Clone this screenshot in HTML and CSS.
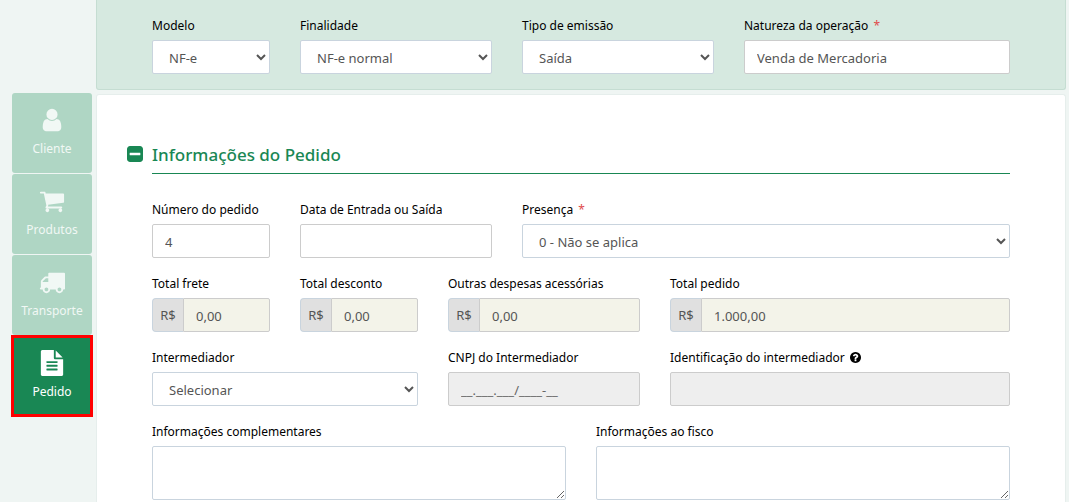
FILE: index.html
```
<!DOCTYPE html>
<html lang="pt-br">
<head>
    <meta charset="utf-8">
    <title>Informações do Pedido</title>
    <link rel="stylesheet" href="styles.css">
</head>
<body>
    <nav class="abas">
        <a class="aba" href="#cliente">
            <svg class="icone" viewBox="0 0 1792 1792"><path d="M1536 1399q0 109-62.500 187t-150.500 78h-854q-88 0-150.500-78t-62.500-187q0-85 8.500-160.500t31.500-152 58.500-131 94-89 134.500-34.500q131 128 313 128t313-128q76 0 134.500 34.500t94 89 58.500 131 31.500 152 8.500 160.500zm-256-887q0 159-112.500 271.500t-271.500 112.500-271.500-112.500-112.500-271.500 112.500-271.500 271.500-112.500 271.500 112.500 112.500 271.500z"/></svg>
            <span>Cliente</span>
        </a>
        <a class="aba" href="#produtos">
            <svg class="icone" viewBox="0 0 1792 1792"><path d="M704 1536q0 52-38 90t-90 38-90-38-38-90 38-90 90-38 90 38 38 90zm896 0q0 52-38 90t-90 38-90-38-38-90 38-90 90-38 90 38 38 90zm128-1088v512q0 24-16.500 42.500t-40.500 21.500l-1044 122q13 60 13 70 0 16-24 64h920q26 0 45 19t19 45-19 45-45 19h-1024q-26 0-45-19t-19-45q0-11 8-31.500t16-36 21.500-40 15.500-29.500l-177-823h-204q-26 0-45-19t-19-45 19-45 45-19h256q16 0 28.500 6.500t19.500 15.500 13 24.500 8 26 5.500 29.500 4.500 26h1201q26 0 45 19t19 45z"/></svg>
            <span>Produtos</span>
        </a>
        <a class="aba" href="#transporte">
            <svg class="icone" viewBox="0 0 1792 1792"><path d="M640 1408q0-52-38-90t-90-38-90 38-38 90 38 90 90 38 90-38 38-90zm-384-512h384v-256h-158q-13 0-22 9l-195 195q-9 9-9 22v30zm1280 512q0-52-38-90t-90-38-90 38-38 90 38 90 90 38 90-38 38-90zm256-1088v1024q0 15-4 26.500t-13.500 18.500-16.500 11.500-23.500 6-22.500 2-25.500 0-22.500-.5q0 106-75 181t-181 75-181-75-75-181h-384q0 106-75 181t-181 75-181-75-75-181h-64q-3 0-22.500.5t-25.500 0-22.500-2-23.500-6-16.500-11.500-13.500-18.500-4-26.500q0-26 19-45t45-19v-320q0-8-.5-35t0-38 2.500-34.500 6.500-37 14-30.500 22.500-30l198-198q19-19 50.500-32t58.500-13h160v-192q0-26 19-45t45-19h1024q26 0 45 19t19 45z"/></svg>
            <span>Transporte</span>
        </a>
        <a class="aba ativa" href="#pedido">
            <svg class="icone" viewBox="0 0 1792 1792"><path d="M1596 476q14 14 28 36h-472v-472q22 14 36 28zm-476 164h544v1056q0 40-28 68t-68 28h-1344q-40 0-68-28t-28-68v-1600q0-40 28-68t68-28h800v544q0 40 28 68t68 28zm160 736v-64q0-14-9-23t-23-9h-704q-14 0-23 9t-9 23v64q0 14 9 23t23 9h704q14 0 23-9t9-23zm0-256v-64q0-14-9-23t-23-9h-704q-14 0-23 9t-9 23v64q0 14 9 23t23 9h704q14 0 23-9t9-23zm0-256v-64q0-14-9-23t-23-9h-704q-14 0-23 9t-9 23v64q0 14 9 23t23 9h704q14 0 23-9t9-23z"/></svg>
            <span>Pedido</span>
        </a>
    </nav>

    <form class="conteudo">
        <section class="painel painel-topo">
            <div class="linha">
                <div class="campo col-2">
                    <label for="modelo">Modelo</label>
                    <select id="modelo"><option>NF-e</option></select>
                </div>
                <div class="campo col-3">
                    <label for="finalidade">Finalidade</label>
                    <select id="finalidade"><option>NF-e normal</option></select>
                </div>
                <div class="campo col-3">
                    <label for="tipo">Tipo de emissão</label>
                    <select id="tipo"><option>Saída</option></select>
                </div>
                <div class="campo col-4">
                    <label for="natureza">Natureza da operação <span class="obrigatorio">*</span></label>
                    <input type="text" id="natureza" value="Venda de Mercadoria">
                </div>
            </div>
        </section>

        <section class="painel painel-pedido" id="pedido">
            <div class="titulo">
                <button type="button" class="recolher" aria-label="Recolher">
                    <svg viewBox="128 128 1536 1536"><path d="M1408 960v-128q0-26-19-45t-45-19h-896q-26 0-45 19t-19 45v128q0 26 19 45t45 19h896q26 0 45-19t19-45zm256-544v960q0 119-84.500 203.500t-203.500 84.500h-960q-119 0-203.500-84.500t-84.500-203.500v-960q0-119 84.500-203.500t203.500-84.500h960q119 0 203.500 84.500t84.500 203.500z"/></svg>
                </button>
                <h2>Informações do Pedido</h2>
            </div>
            <div class="linha">
                <div class="campo col-2">
                    <label for="numero">Número do pedido</label>
                    <input type="text" id="numero" value="4">
                </div>
                <div class="campo col-3">
                    <label for="data">Data de Entrada ou Saída</label>
                    <input type="text" id="data">
                </div>
                <div class="campo col-7">
                    <label for="presenca">Presença <span class="obrigatorio">*</span></label>
                    <select id="presenca"><option>0 - Não se aplica</option></select>
                </div>

                <div class="campo col-2">
                    <label for="frete">Total frete</label>
                    <div class="grupo"><span class="moeda">R$</span><input type="text" id="frete" value="0,00" readonly></div>
                </div>
                <div class="campo col-2">
                    <label for="desconto">Total desconto</label>
                    <div class="grupo"><span class="moeda">R$</span><input type="text" id="desconto" value="0,00" readonly></div>
                </div>
                <div class="campo col-3">
                    <label for="despesas">Outras despesas acessórias</label>
                    <div class="grupo"><span class="moeda">R$</span><input type="text" id="despesas" value="0,00" readonly></div>
                </div>
                <div class="campo col-5">
                    <label for="total">Total pedido</label>
                    <div class="grupo"><span class="moeda">R$</span><input type="text" id="total" value="1.000,00" readonly></div>
                </div>

                <div class="campo col-4">
                    <label for="intermediador">Intermediador</label>
                    <select id="intermediador"><option>Selecionar</option></select>
                </div>
                <div class="campo col-3">
                    <label for="cnpj">CNPJ do Intermediador</label>
                    <input type="text" id="cnpj" placeholder="__.___.___/____-__" disabled>
                </div>
                <div class="campo col-5">
                    <label for="identificacao">Identificação do intermediador
                        <svg class="ajuda" viewBox="128 128 1536 1536"><path d="M1024 1376v-192q0-14-9-23t-23-9h-192q-14 0-23 9t-9 23v192q0 14 9 23t23 9h192q14 0 23-9t9-23zm256-672q0-88-55.500-163t-138.500-116-170-41q-243 0-371 213-15 24 8 42l132 100q7 6 19 6 16 0 25-12 53-68 86-92 34-24 86-24 48 0 85.500 26t37.500 59q0 38-20 61t-68 45q-63 28-115.500 86.500t-52.500 125.500v36q0 14 9 23t23 9h192q14 0 23-9t9-23q0-19 21.500-49.500t54.500-49.500q32-18 49-28.500t46-35 44.500-48 28-60.500 12.500-81zm384 192q0 209-103 385.500t-279.500 279.500-385.500 103-385.500-103-279.500-279.500-103-385.500 103-385.500 279.500-279.500 385.500-103 385.500 103 279.500 279.500 103 385.500z"/></svg>
                    </label>
                    <input type="text" id="identificacao" disabled>
                </div>

                <div class="campo col-6">
                    <label for="complementares">Informações complementares</label>
                    <textarea id="complementares"></textarea>
                </div>
                <div class="campo col-6">
                    <label for="fisco">Informações ao fisco</label>
                    <textarea id="fisco"></textarea>
                </div>
            </div>
        </section>
    </form>
</body>
</html>
```
FILE: styles.css
```
* {
    box-sizing: border-box;
}
body {
    display: flex;
    margin: 0;
    min-height: 100vh;
    background-color: #eff5f3;
    font-family: "Noto Sans", "Open Sans", sans-serif;
    font-size: 12px;
    line-height: 20px;
    color: #000;
}

/* abas laterais */
.abas {
    display: flex;
    flex-direction: column;
    gap: 1px;
    flex: none;
    width: 96px;
    padding: 93px 4px 0 12px;
}
.aba {
    display: flex;
    flex-direction: column;
    align-items: center;
    gap: 6px;
    height: 80px;
    padding-top: 14px;
    border-radius: 3px;
    background-color: #afd6c4;
    color: #f1f8f5;
    text-decoration: none;
}
.icone {
    width: 26px;
    height: 26px;
    fill: currentColor;
}
.ativa {
    background-color: #198754;
    color: #fff;
    border-radius: 0;
    outline: 3px solid #f00;
    outline-offset: -2px;
}

/* painéis */
.conteudo {
    display: flex;
    flex-direction: column;
    flex: 1;
    gap: 4px;
    min-width: 0;
    margin-right: 3px;
}
.painel {
    padding: 0 55px;
    border: 1px solid #e6eeec;
    border-radius: 3px;
}
.painel-topo {
    padding-top: 16px;
    padding-bottom: 15px;
    border-color: #c5ddd2;
    border-top: none;
    border-radius: 0 0 3px 3px;
    background-color: #d6e9e0;
}
.painel-pedido {
    flex: 1;
    padding-top: 48px;
    border-bottom: none;
    border-radius: 3px 3px 0 0;
    background-color: #fff;
}
.titulo {
    display: flex;
    align-items: flex-start;
    gap: 9px;
    margin: 0 0 26px -25px;
}
.recolher {
    width: 16px;
    height: 16px;
    margin-top: 3px;
    padding: 0;
    border: none;
    background: none;
    cursor: pointer;
}
.recolher svg {
    display: block;
    fill: #198754;
}
h2 {
    flex: 1;
    margin: 0;
    padding-bottom: 6px;
    border-bottom: 1px solid #198754;
    font-size: 17px;
    font-weight: 500;
    line-height: 24px;
    color: #198754;
}

/* campos */
.linha {
    display: grid;
    grid-template-columns: repeat(12, minmax(0, 1fr));
    gap: 16px 30px;
}
.campo {
    display: flex;
    flex-direction: column;
    gap: 4px;
}
.col-2 { grid-column: span 2; }
.col-3 { grid-column: span 3; }
.col-4 { grid-column: span 4; }
.col-5 { grid-column: span 5; }
.col-6 { grid-column: span 6; }
.col-7 { grid-column: span 7; }
label {
    white-space: nowrap;
}
.obrigatorio {
    margin-left: 2px;
    color: #e04b4b;
}
.ajuda {
    width: 11px;
    height: 11px;
    margin-left: 2px;
    vertical-align: -1px;
}
input, select, textarea {
    width: 100%;
    height: 34px;
    padding: 2px 12px 0;
    border: 1px solid #ccc;
    border-radius: 2px;
    background-color: #fff;
    font-family: inherit;
    font-size: 13px;
    color: #555;
}
select, textarea {
    border-color: #c9d4de;
}
select {
    padding-right: 0;
}
textarea {
    display: block;
    height: 54px;
}
input:disabled {
    background-color: #eee;
}
input::placeholder {
    color: #666;
}
.grupo {
    display: flex;
}
.moeda {
    flex: none;
    width: 31px;
    border: 1px solid #c9d4de;
    border-right: none;
    border-radius: 4px 0 0 4px;
    background-color: #e0e0e0;
    font-size: 13px;
    line-height: 32px;
    text-align: center;
    color: #555;
}
.grupo input {
    flex: 1;
    min-width: 0;
    border-radius: 0 2px 2px 0;
    background-color: #f3f3e9;
}
```
